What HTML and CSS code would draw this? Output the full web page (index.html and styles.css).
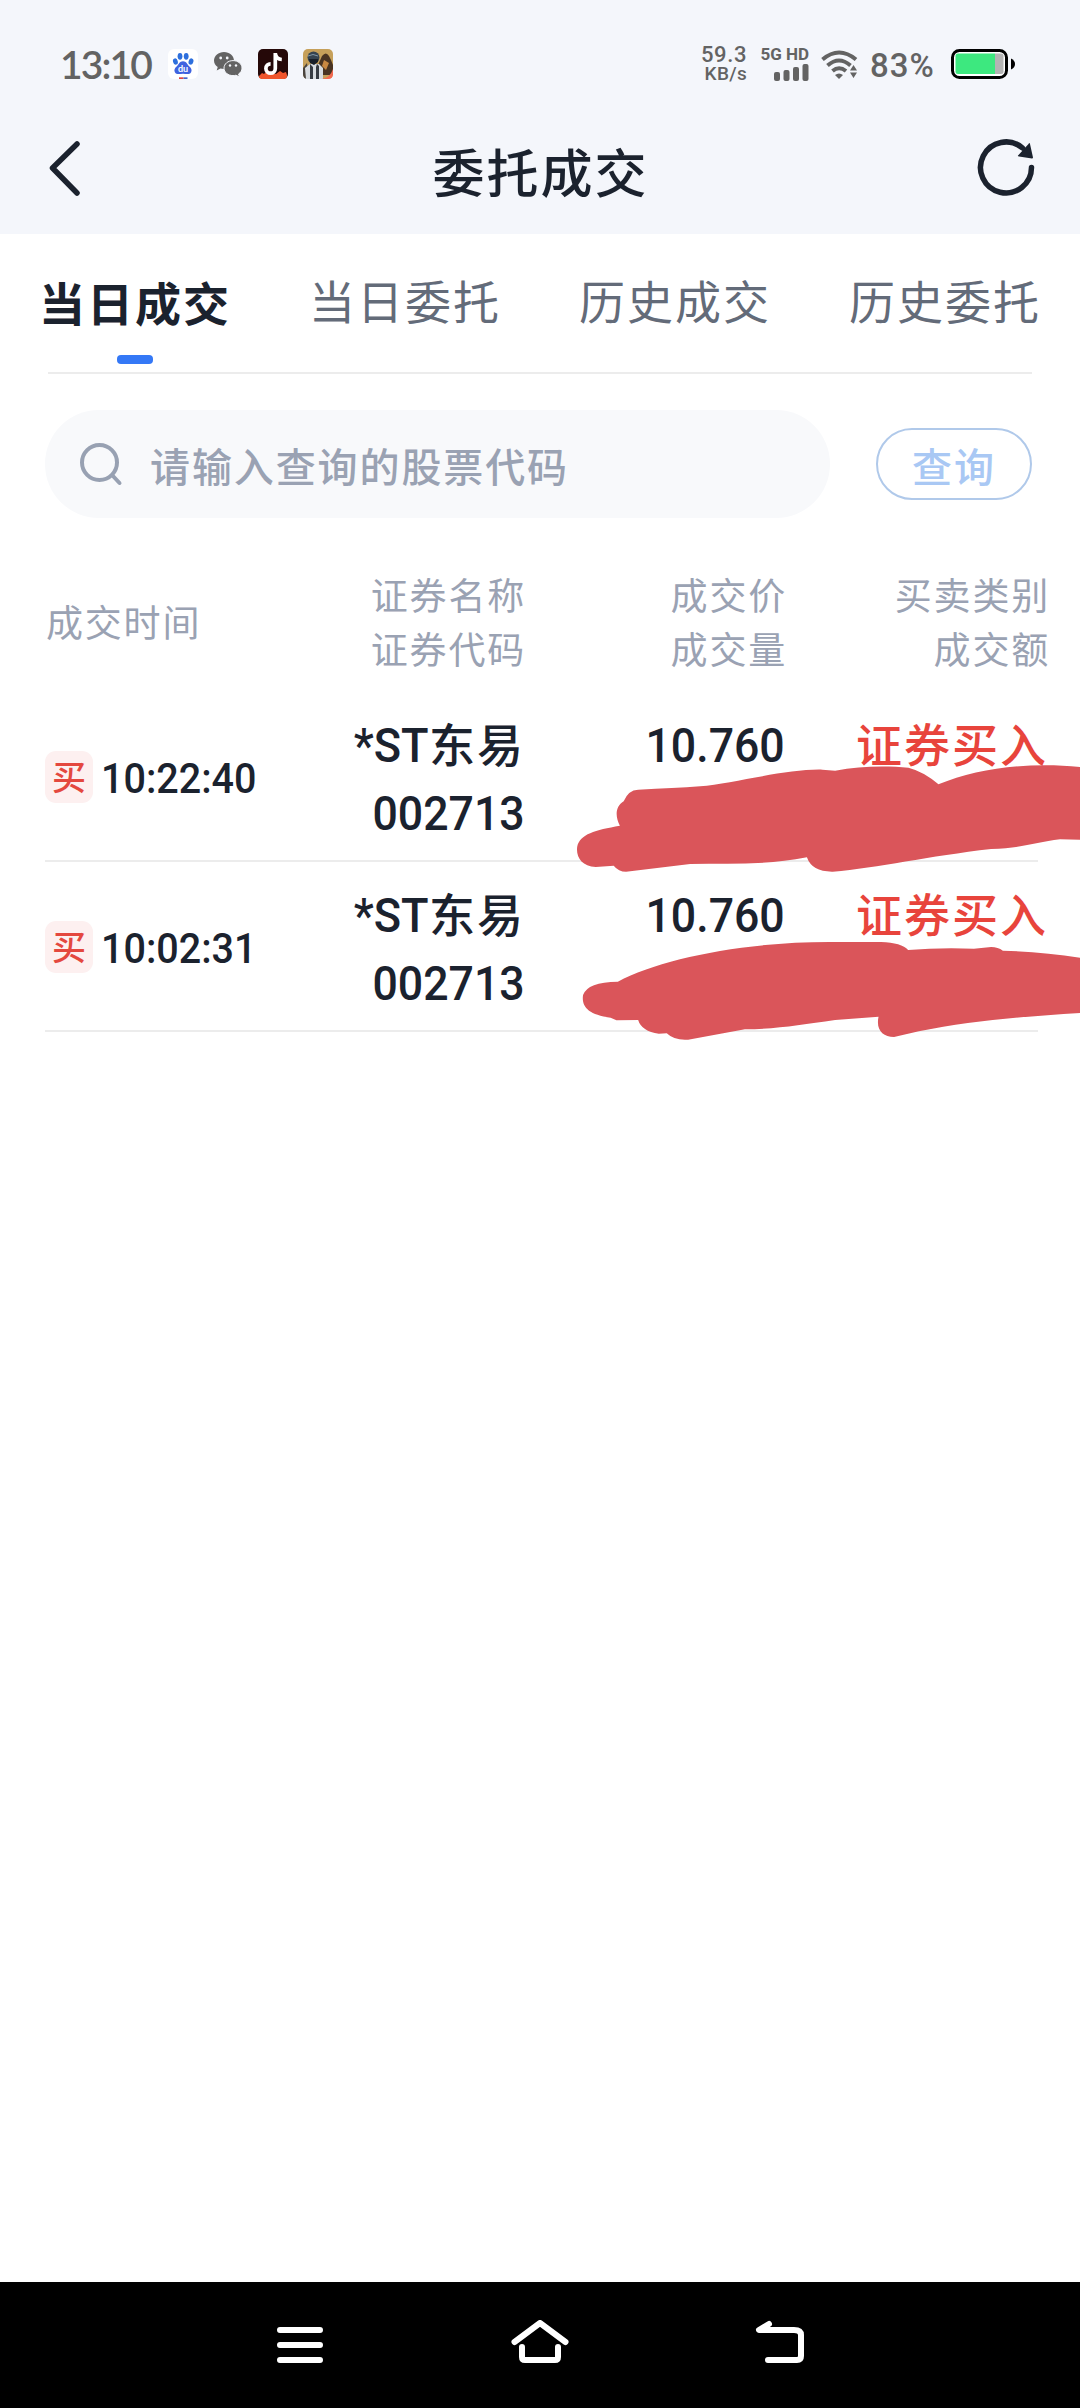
FILE: index.html
```html
<!DOCTYPE html>
<html lang="zh-CN">
<head>
<meta charset="utf-8">
<title>委托成交</title>
<link rel="stylesheet" href="styles.css">
</head>
<body>
<div class="screen">
  <header class="top">
    <div class="status">
      <span class="clock">13:10</span>
      <svg class="app-icon" viewBox="0 0 30 30">
        <rect width="30" height="30" rx="6" fill="#fff"/>
        <g fill="#2d6fdd"><ellipse cx="7.4" cy="12.5" rx="2.4" ry="3.2" transform="rotate(-15 7.4 12.5)"/><ellipse cx="12" cy="7.3" rx="2.4" ry="3.4"/><ellipse cx="18.2" cy="7.3" rx="2.4" ry="3.4"/><ellipse cx="23" cy="12.5" rx="2.4" ry="3.2" transform="rotate(15 23 12.5)"/></g>
        <path d="M15 12.2c3.400 0 4.200 3.200 6.400 5.200 2 1.700 2.800 3.800 1.700 5.800-1.600 3-5.200 1.500-8.100 1.500s-6.500 1.500-8.100-1.500c-1.100-2-.3-4.100 1.700-5.800 2.200-2 3-5.200 6.400-5.200z" fill="#3f63e0"/>
        <text x="15" y="23" text-anchor="middle" class="du">du</text>
        <rect x="11" y="28.300" width="4.500" height="1.700" fill="#d44"/><rect x="15.500" y="28.300" width="4" height="1.700" fill="#46c"/>
      </svg>
      <svg class="wechat" viewBox="0 0 28 25">
        <path d="M10 0C4.500 0 0 3.900 0 8.600c0 2.700 1.400 5 3.700 6.500l-1 3.400 3.800-2.100c1 .3 2 .5 3.500.5 5.500 0 10-3.600 10-8.300S15.500 0 10 0z" fill="#636363"/>
        <path d="M19 8.600c-5 0-9 3.300-9 7.500s4 7.500 9 7.500c1.100 0 2.100-.1 3-.4l3.500 1.800-1-2.900c2.200-1.400 3.500-3.500 3.500-6 0-4.200-4-7.500-9-7.500z" fill="#636363" stroke="#f4f6fb" stroke-width="1"/>
        <g fill="#f4f6fb"><circle cx="6.700" cy="6" r="1.400"/><circle cx="13.200" cy="6" r="1.400"/><circle cx="16" cy="13.500" r="1.200"/><circle cx="22" cy="13.500" r="1.200"/></g>
      </svg>
      <svg class="app-icon" viewBox="0 0 30 30">
        <rect width="30" height="30" rx="5" fill="#250808"/>
        <path d="M1 27l3-3 2 1 4-4 3 3 5 1 4-3 3 2 3-1 1 3v1q0 3-3 3H4q-3 0-3-3z" fill="#f0552c"/>
        <path d="M17.300 4v15.500a4.700 4.700 0 1 1-4.700-4.700M17.300 4.500c.5 3.700 3 5.800 6.500 6" fill="none" stroke="#fff" stroke-width="3.700"/>
      </svg>
      <svg class="app-icon" viewBox="0 0 30 30">
        <rect width="30" height="30" rx="5" fill="#c6a05a"/>
        <path d="M0 19l4-5 2 16H5q-5 0-5-5z" fill="#4a443d"/>
        <path d="M19 7q4-5 7 0l2 4 2 5v10H19l-4-10z" fill="#4a3422"/>
        <path d="M21 11l5 3-3 7-4-4z" fill="#c98842"/>
        <path d="M2 19l5-4h9l4 4v11H3z" fill="#d8dce0"/>
        <path d="M7 15l3 3v12H7zM14 15l2 2v13h-3V18z" fill="#363b42"/>
        <circle cx="10.500" cy="8.500" r="6" fill="#354450"/>
        <path d="M6 10h9v3l-4 3-4-2z" fill="#181f28"/>
        <path d="M5 7q5-3 10 0" stroke="#8297a6" fill="none"/>
        <path d="M30 20v5q0 5-5 5h-6q8-1 11-10z" fill="#f46a50"/>
      </svg>
      <div class="status-right">
        <div class="speed"><span class="rate">59.3</span><span class="unit">KB/s</span></div>
        <div class="cell"><span>5G HD</span>
          <svg viewBox="0 0 36 17"><g fill="#636363"><rect x="1" y="8" width="6" height="9" rx="2"/><rect x="10.500" y="6" width="6" height="11" rx="2"/><rect x="20" y="3" width="6" height="14" rx="2"/><rect x="29.500" width="6" height="17" rx="2"/></g></svg>
        </div>
        <svg class="wifi" viewBox="0 0 37 29">
          <g fill="none" stroke="#636363" stroke-width="4"><path d="M1.500 9.500Q18 -4.500 35 9.500"/><path d="M6.500 15.500Q18 5.500 29.500 15.500"/><path d="M11.500 21Q18 15.500 25 21"/></g>
          <path d="M14 25q4-3 8 0l-4 4z" fill="#636363"/>
          <path d="M29 20.500l3.500-5.500 3.500 5.500zM29 22.500h7l-3.500 5.500z" fill="#636363"/>
        </svg>
        <span class="percent">83%</span>
        <svg class="battery" viewBox="0 0 65 30">
          <rect x="1.500" y="1.500" width="54" height="27" rx="7" fill="#fff" stroke="#000" stroke-width="3"/>
          <path d="M7 4.500H44V25H7q-2.500 0-2.500-2.500V7q0-2.500 2.500-2.500z" fill="#3de87f"/>
          <path d="M44 4.500h6q2.500 0 2.500 2.500v15.500q0 2.500-2.500 2.500h-6z" fill="#b4b4b4"/>
          <path d="M60 9.500q4 2 4 5.500t-4 5.500z"/>
        </svg>
      </div>
    </div>
    <div class="titlebar">
      <svg class="back" viewBox="0 0 34 58"><path d="M30 4L5.500 28 30 53" fill="none" stroke="#1b222e" stroke-width="5.500" stroke-linecap="round" stroke-linejoin="round"/></svg>
      <h1>委托成交</h1>
      <svg class="refresh" viewBox="0 0 60 60"><path d="M54.500 28.500A25.500 25.500 0 1 1 45.500 9" fill="none" stroke="#1b222e" stroke-width="5.500" stroke-linecap="round"/><path d="M51.500 5q1-2 1.500 0l3 13.500q0 1-1 1l-13-2q-2-.5-.5-1.500z" fill="#1b222e"/></svg>
    </div>
  </header>

  <nav class="tabs">
    <span class="tab active">当日成交</span>
    <span class="tab">当日委托</span>
    <span class="tab">历史成交</span>
    <span class="tab">历史委托</span>
  </nav>

  <div class="search">
    <div class="field">
      <svg class="lens" viewBox="0 0 44 44"><circle cx="19.500" cy="19.500" r="17.500" fill="none" stroke="#98a1b2" stroke-width="4"/><path d="M32.500 32.500l7 7.500" stroke="#98a1b2" stroke-width="4" stroke-linecap="round"/></svg>
      <span>请输入查询的股票代码</span>
    </div>
    <span class="query">查询</span>
  </div>

  <div class="row head">
    <div class="c-time">成交时间</div>
    <div class="c-name"><span>证券名称</span><span>证券代码</span></div>
    <div class="c-price"><span>成交价</span><span>成交量</span></div>
    <div class="c-type"><span>买卖类别</span><span>成交额</span></div>
  </div>

  <div class="records">
    <div class="row deal">
      <div class="c-time"><span class="badge">买</span><span class="time">10:22:40</span></div>
      <div class="c-name"><span class="name"><span class="st">*ST</span><span class="han">东易</span></span><span class="code">002713</span></div>
      <div class="c-price"><span class="price">10.760</span></div>
      <div class="c-type"><span class="han">证券买入</span></div>
    </div>
    <div class="row deal">
      <div class="c-time"><span class="badge">买</span><span class="time">10:02:31</span></div>
      <div class="c-name"><span class="name"><span class="st">*ST</span><span class="han">东易</span></span><span class="code">002713</span></div>
      <div class="c-price"><span class="price">10.760</span></div>
      <div class="c-type"><span class="han">证券买入</span></div>
    </div>
    <svg class="scribble" viewBox="0 0 1568 1080" preserveAspectRatio="none" fill="#da555a">
      <path d="M285 299Q390 295 465 289C560 280 720 236 820 239L857 242C930 227 1010 227 1070 233Q1115 245 1157 283C1270 235 1420 215 1568 231V449L1510 448C1440 457 1400 474 1310 477C1130 498 980 534 850 545Q790 546 775 502C660 526 550 519 436 522L250 545Q228 545 214 527L162 531C120 530 104 500 108 470C116 432 160 420 232 407C218 380 218 350 243 334Q256 300 285 299z"/>
      <path d="M226 875C350 806 590 756 840 756H990Q1050 758 1069 780Q1160 772 1260 776L1310 771Q1330 771 1344 782Q1460 786 1568 803V969C1400 980 1250 992 1100 1024L1028 1041C995 1040 975 1020 983 980L857 990C760 1004 690 1017 595 1018L430 1049Q390 1052 368 1030L345 1031Q295 1024 285 990L222 991L205 983C140 974 120 950 125 915Q138 876 226 875z"/>
    </svg>
  </div>

  <footer class="navbar">
    <svg viewBox="0 0 60 50"><path d="M10 10H50M10 25H50M10 40H50"/></svg>
    <svg viewBox="0 0 60 50"><path d="M4.500 22L30 3 55.500 22M12 27V37Q12 40 15 40H45Q48 40 48 37V27"/></svg>
    <svg viewBox="0 0 60 50"><path d="M19 4L9 10H44Q51 10 51 15V36Q51 40 47 40H18"/></svg>
  </footer>
</div>
</body>
</html>
```
FILE: styles.css
```css
* { box-sizing: border-box; }
body {
  margin: 0;
  background: #fff;
  color: #1b222e;
  font-family: "Noto Sans CJK SC", sans-serif;
}
svg { display: block; flex: none; }
.screen {
  position: relative;
  display: flex;
  flex-direction: column;
  width: 1080px;
  height: 2408px;
  overflow: hidden;
}
.top { height: 234px; background: #f4f6fb; }

.status {
  display: flex;
  align-items: center;
  height: 128px;
  padding: 0 64px 0 60px;
  color: #636363;
}
.clock {
  width: 108px;
  padding-bottom: 1px;
  font: 600 39px/40px Lato, sans-serif;
  letter-spacing: -1.9px;
}
.app-icon { width: 30px; height: 30px; }
.du { font: 700 9px Lato, sans-serif; fill: #fff; }
.wechat { width: 28px; height: 25px; margin: 0 16px; }
.wechat + .app-icon { margin-right: 15px; }
.status-right {
  display: flex;
  align-items: center;
  margin-left: auto;
}
.speed {
  display: flex;
  flex-direction: column;
  width: 46px;
  text-align: right;
  font: 500 19px/19px Roboto, sans-serif;
}
.rate { font-size: 22px; line-height: 18px; letter-spacing: 0.6px; }
.unit { letter-spacing: 0.3px; }
.cell {
  display: flex;
  flex-direction: column;
  align-items: flex-end;
  gap: 3px;
  width: 50px;
  margin: 0 12px;
  font: 700 17px/14px Roboto, sans-serif;
  white-space: nowrap;
}
.cell svg { width: 36px; height: 17px; }
.wifi { width: 37px; height: 29px; }
.percent {
  width: 68px;
  margin: 4px 13px 0 12px;
  font: 500 33px/34px Roboto, sans-serif;
  letter-spacing: 1px;
}
.battery { width: 65px; height: 30px; }

.titlebar {
  display: flex;
  justify-content: space-between;
  height: 106px;
  padding: 0 43px 0 47px;
}
.back { width: 34px; height: 58px; margin-top: 12px; }
h1 {
  margin: 17px 0 0 23px;
  font-size: 52px;
  font-weight: 500;
  line-height: 52px;
  letter-spacing: 2px;
}
.refresh { width: 60px; height: 60px; margin-top: 11px; }

.tabs {
  display: grid;
  grid-template-columns: repeat(4, 270px);
  height: 140px;
  background: linear-gradient(#ececec, #ececec) 48px 138px / 984px 2px no-repeat;
}
.tab {
  display: flex;
  flex-direction: column;
  align-items: center;
  padding-top: 40px;
  color: #636b79;
  font-size: 46px;
  line-height: 50px;
  letter-spacing: 2px;
}
.active { padding-top: 42px; color: #1b222e; font-weight: 700; }
.active::after {
  content: "";
  width: 36px;
  height: 9px;
  margin-top: 29px;
  border-radius: 4px;
  background: #3478f6;
}

.search {
  display: flex;
  align-items: center;
  justify-content: space-between;
  height: 108px;
  margin: 36px 48px 0 45px;
}
.field {
  display: flex;
  align-items: center;
  gap: 26px;
  width: 785px;
  height: 108px;
  padding: 2px 0 0 35px;
  border-radius: 54px;
  background: #f8f9fb;
  color: #9aa2b3;
  font-size: 40px;
  font-weight: 500;
  line-height: 50px;
  letter-spacing: 1.9px;
}
.lens { width: 44px; height: 44px; }
.query {
  width: 156px;
  height: 72px;
  border: 2px solid #b0c9ea;
  border-radius: 36px;
  color: #a9c8f4;
  font-size: 40px;
  font-weight: 500;
  line-height: 71px;
  letter-spacing: 2px;
  text-align: center;
}

.row {
  display: grid;
  grid-template-columns: 280px 200px 261px 263px;
}
.row > div { display: flex; flex-direction: column; align-items: flex-end; }
.row > .c-time { flex-direction: row; align-items: center; }
.head {
  height: 174px;
  padding: 49px 0 0 46px;
  color: #9aa2b3;
  font-size: 37px;
  line-height: 54px;
  letter-spacing: 1.8px;
}
.head .c-time { height: 108px; }

.records { position: relative; }
.deal {
  height: 170px;
  margin: 0 42px 0 45px;
  padding-top: 20px;
  border-bottom: 2px solid #ececec;
  grid-template-columns: 280px 200px 260px 263px;
  font: 500 48px/68px Roboto, "Noto Sans CJK SC", sans-serif;
}
.deal .c-time { align-self: center; gap: 8px; padding-bottom: 18px; }
.badge {
  width: 48px;
  height: 52px;
  border-radius: 11px;
  background: #fdf0f0;
  color: #e4483f;
  font: 500 34px/50px "Noto Sans CJK SC", sans-serif;
  text-align: center;
}
.time {
  padding-top: 4px;
  font-size: 42px;
  transform: scaleX(0.94);
  transform-origin: left;
}
.han { font-size: 46px; letter-spacing: 2px; }
.st {
  display: inline-block;
  transform: scaleX(0.94);
  transform-origin: right;
}
.code, .price {
  transform: scaleX(0.93);
  transform-origin: right;
}
.deal .c-type { color: #e8443c; }

.scribble {
  position: absolute;
  left: 540px;
  top: -2px;
  width: 540px;
  height: 360px;
}

.navbar {
  display: flex;
  align-items: center;
  justify-content: center;
  gap: 180px;
  height: 126px;
  margin-top: auto;
  background: #000;
}
.navbar svg {
  width: 60px;
  height: 50px;
  fill: none;
  stroke: #fff;
  stroke-width: 6;
  stroke-linecap: round;
  stroke-linejoin: round;
}
```
